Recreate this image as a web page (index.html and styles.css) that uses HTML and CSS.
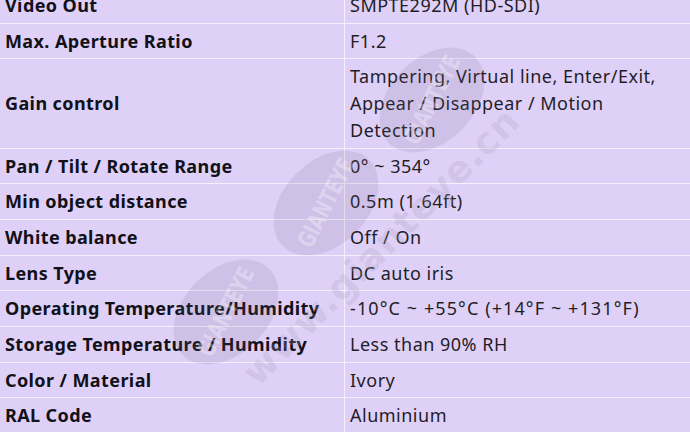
FILE: index.html
```html
<!DOCTYPE html>
<html>
<head>
<meta charset="utf-8">
<link rel="stylesheet" href="styles.css">
</head>
<body>
<div class="page">
<table class="spec">
<tr><th>Video Out</th><td>SMPTE292M (HD-SDI)</td></tr>
<tr><th>Max. Aperture Ratio</th><td>F1.2</td></tr>
<tr><th>Gain control</th><td>Tampering, Virtual line, Enter/Exit,<br>Appear / Disappear / Motion<br>Detection</td></tr>
<tr><th>Pan / Tilt / Rotate Range</th><td>0° ~ 354°</td></tr>
<tr><th>Min object distance</th><td>0.5m (1.64ft)</td></tr>
<tr><th>White balance</th><td>Off / On</td></tr>
<tr><th>Lens Type</th><td>DC auto iris</td></tr>
<tr><th>Operating Temperature/Humidity</th><td class="wide">-10°C ~ +55°C (+14°F ~ +131°F)</td></tr>
<tr><th>Storage Temperature / Humidity</th><td>Less than 90% RH</td></tr>
<tr><th>Color / Material</th><td>Ivory</td></tr>
<tr><th>RAL Code</th><td>Aluminium</td></tr>
</table>
<div class="wm wm-a"><span>GIANTEYE</span></div>
<div class="wm wm-b"><span>GIANTEYE</span></div>
<div class="wm wm-c"><span>GIANTEYE</span></div>
<div class="wm-url">www.gianteye.cn</div>
</div>
</body>
</html>
```
FILE: styles.css
```css
html, body {
  margin: 0;
  padding: 0;
  background: #dfd0f8;
  overflow: hidden;
}
.page {
  position: relative;
  width: 690px;
  height: 432px;
  overflow: hidden;
}
.spec {
  border-collapse: collapse;
  width: 720px;
  margin-top: -13px;
  margin-left: -1px;
  font-family: "Noto Sans", sans-serif;
  font-size: 18px;
  line-height: 26.7px;
  color: #111118;
  background: #dfd0f8;
}
.spec th, .spec td {
  border: 1px solid #f6f0fc;
  padding: 4px 5px;
  text-align: left;
  vertical-align: middle;
}
.spec th {
  width: 334px;
  font-weight: 700;
  letter-spacing: 0.4px;
}
.spec td {
  font-weight: 400;
  letter-spacing: 0.5px;
  color: #1e1e26;
}
.spec td.wide {
  letter-spacing: 1.1px;
}
.wm {
  position: absolute;
  width: 122px;
  height: 84px;
  border-radius: 50%;
  background: rgba(110, 100, 125, 0.14);
  transform: rotate(-45deg);
  display: flex;
  align-items: center;
  justify-content: center;
}
.wm span {
  font-family: "DejaVu Sans Condensed", "DejaVu Sans", sans-serif;
  font-weight: 700;
  font-size: 24px;
  color: rgba(255, 255, 255, 0.32);
  transform: rotate(-18deg) scaleX(0.8);
  letter-spacing: 0;
}
.wm-a { left: 371px; top: 58px; }
.wm-b { left: 265px; top: 161px; }
.wm-c { left: 165px; top: 270px; }
.wm-url {
  position: absolute;
  left: 264px;
  top: 352px;
  height: 42px;
  line-height: 42px;
  font-family: "DejaVu Sans", sans-serif;
  font-weight: 700;
  font-size: 37px;
  letter-spacing: 1px;
  color: rgba(170, 160, 185, 0.26);
  transform: rotate(-45deg);
  transform-origin: left bottom;
  white-space: nowrap;
}
```
